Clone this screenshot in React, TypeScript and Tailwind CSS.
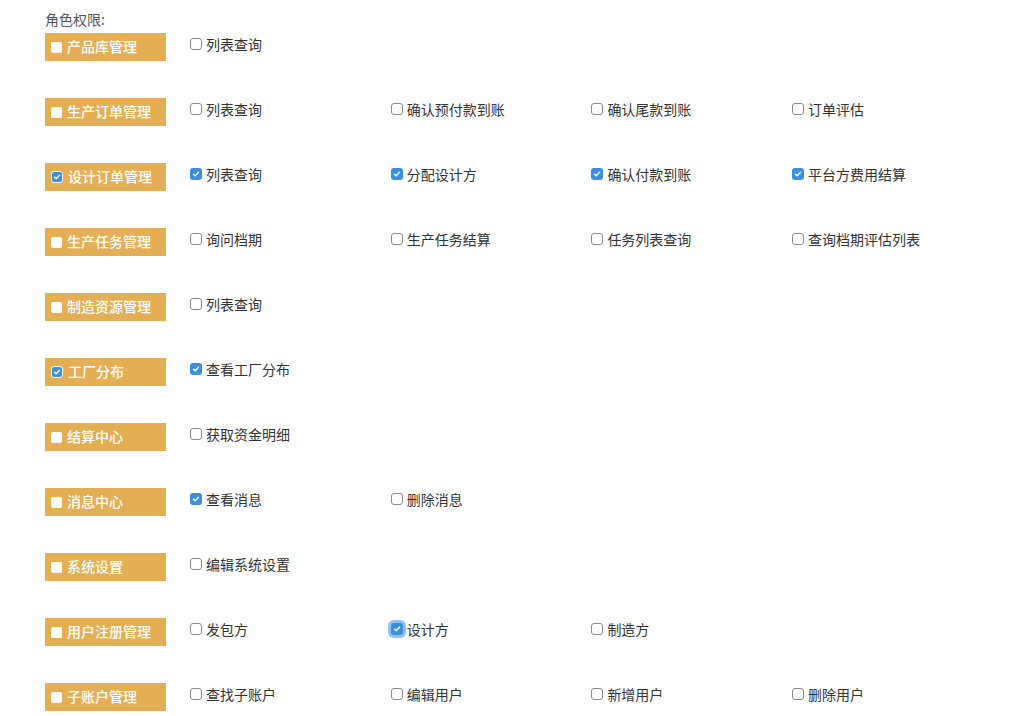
import React from 'react'

interface Perm {
  name: string
  checked?: boolean
  focus?: boolean
}

interface Group {
  title: string
  checked?: boolean
  perms: Perm[]
}

const groups: Group[] = [
  { title: '产品库管理', perms: [{ name: '列表查询' }] },
  {
    title: '生产订单管理',
    perms: [{ name: '列表查询' }, { name: '确认预付款到账' }, { name: '确认尾款到账' }, { name: '订单评估' }],
  },
  {
    title: '设计订单管理',
    checked: true,
    perms: [
      { name: '列表查询', checked: true },
      { name: '分配设计方', checked: true },
      { name: '确认付款到账', checked: true },
      { name: '平台方费用结算', checked: true },
    ],
  },
  {
    title: '生产任务管理',
    perms: [{ name: '询问档期' }, { name: '生产任务结算' }, { name: '任务列表查询' }, { name: '查询档期评估列表' }],
  },
  { title: '制造资源管理', perms: [{ name: '列表查询' }] },
  { title: '工厂分布', checked: true, perms: [{ name: '查看工厂分布', checked: true }] },
  { title: '结算中心', perms: [{ name: '获取资金明细' }] },
  { title: '消息中心', perms: [{ name: '查看消息', checked: true }, { name: '删除消息' }] },
  { title: '系统设置', perms: [{ name: '编辑系统设置' }] },
  {
    title: '用户注册管理',
    perms: [{ name: '发包方' }, { name: '设计方', checked: true, focus: true }, { name: '制造方' }],
  },
  {
    title: '子账户管理',
    perms: [{ name: '查找子账户' }, { name: '编辑用户' }, { name: '新增用户' }, { name: '删除用户' }],
  },
]

function Box({ checked, focus, inBadge }: { checked?: boolean; focus?: boolean; inBadge?: boolean }) {
  if (checked) {
    return (
      <span
        className={`inline-flex items-center justify-center w-[12px] h-[12px] rounded-[3px] bg-[#3d8fdc] ${
          focus ? 'ring-[3px] ring-[#8fc0f0]' : ''
        } ${inBadge ? 'border border-white' : ''}`}
      >
        <svg width="8" height="8" viewBox="0 0 8 8" fill="none">
          <path d="M1.5 4.2 L3.2 5.8 L6.5 2.2" stroke="white" strokeWidth="1.4" strokeLinecap="round" strokeLinejoin="round" />
        </svg>
      </span>
    )
  }
  if (inBadge) {
    return <span className="inline-block w-[11px] h-[11px] rounded-[2px] bg-white" />
  }
  return <span className="inline-block w-[12px] h-[12px] rounded-[3px] border border-[#8a8a8a] bg-white" />
}

export default function App() {
  return (
    <div
      className="bg-white w-[1035px] h-[716px] overflow-hidden pl-[45px] pt-[10px] text-[#333]"
      style={{ fontFamily: '"Noto Sans CJK SC", "Liberation Sans", sans-serif' }}
    >
      <div className="text-[14px] leading-[18px] text-[#555] h-[23px]">角色权限:</div>
      {groups.map(g => (
        <div key={g.title} className="flex items-start h-[65px]">
          <div className="w-[121px] h-[28px] bg-[#e4ae55] flex items-center pl-[6px] gap-[5px] shrink-0">
            <Box checked={g.checked} inBadge />
            <span className="text-[14px] text-white font-medium leading-none -translate-y-[1px]">{g.title}</span>
          </div>
          <div className="flex pl-[24px] pt-[1px]">
            {g.perms.map(p => (
              <label key={p.name} className="w-[200.7px] flex items-center gap-[4px] text-[14px] leading-[20px] text-[#333]">
                <Box checked={p.checked} focus={p.focus} />
                <span>{p.name}</span>
              </label>
            ))}
          </div>
        </div>
      ))}
    </div>
  )
}
